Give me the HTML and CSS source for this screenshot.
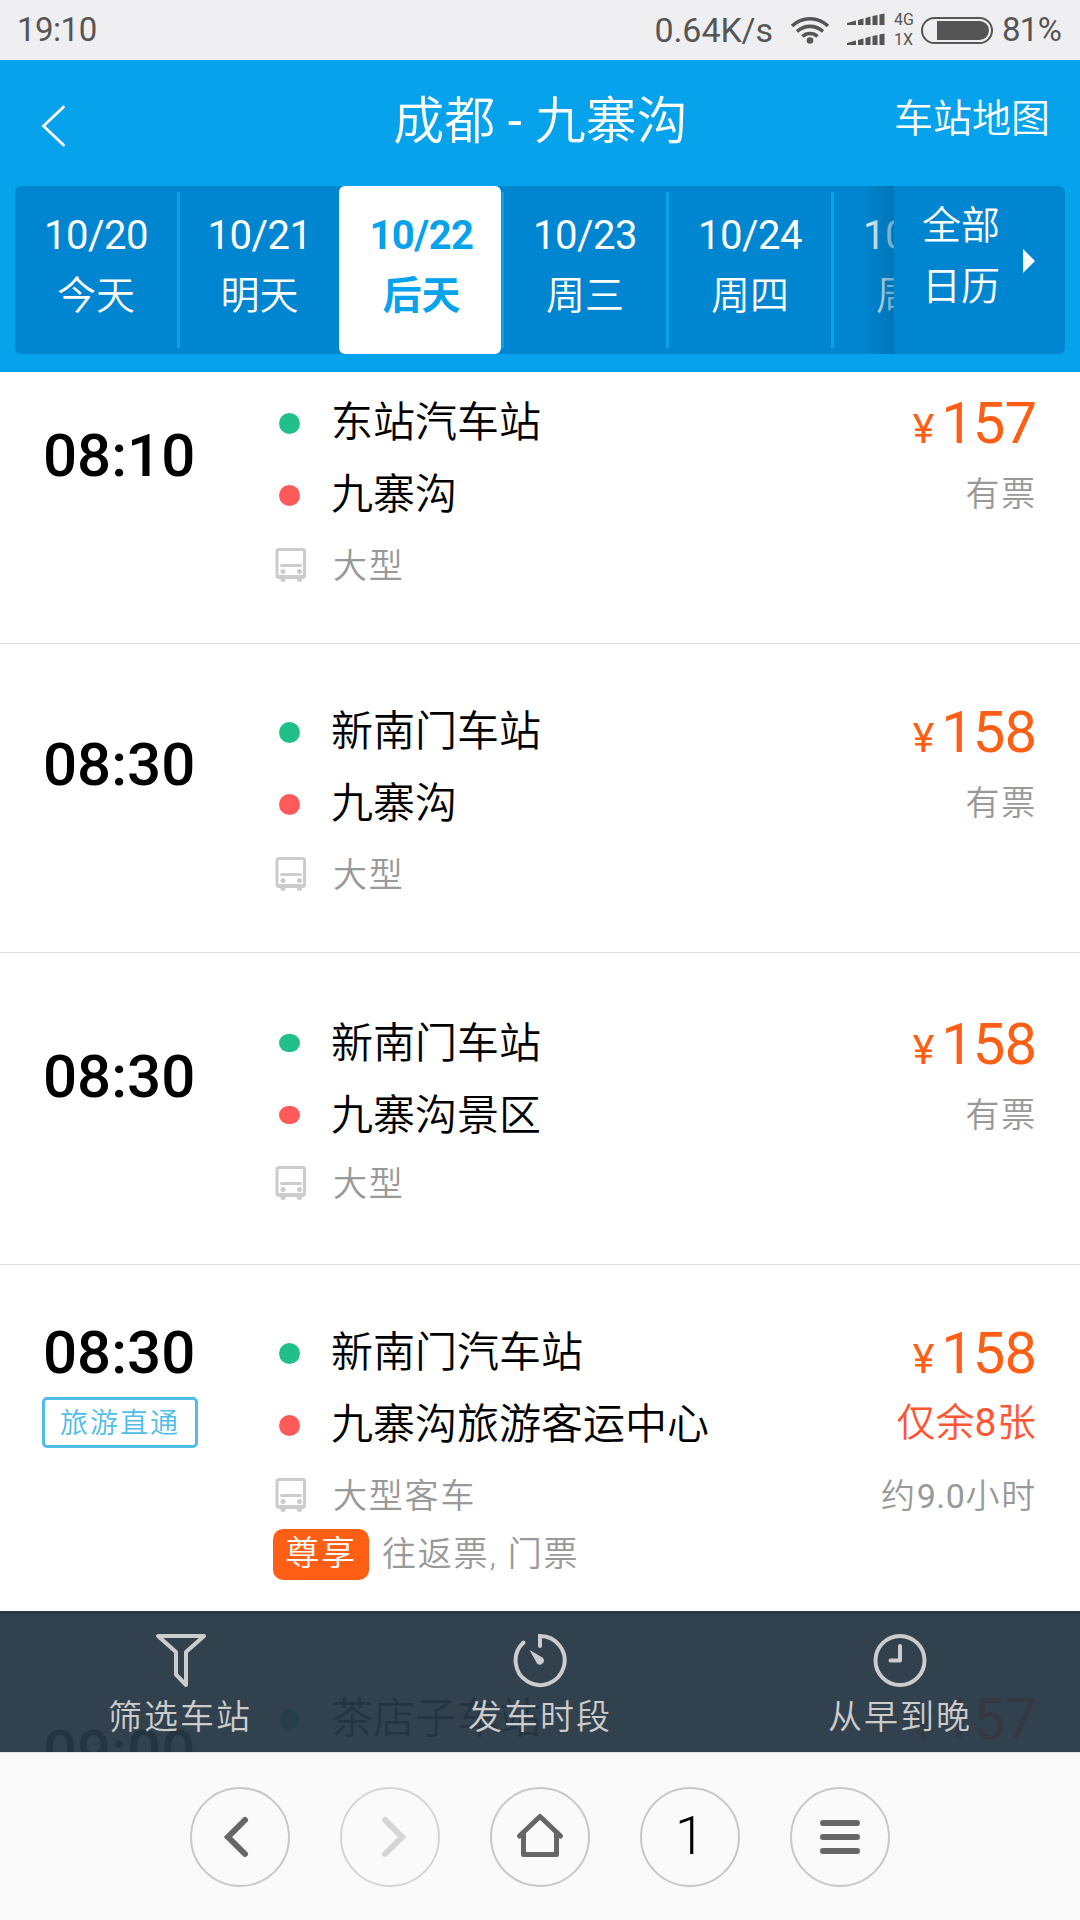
FILE: index.html
```html
<!DOCTYPE html>
<html lang="zh-CN">
<head>
    <meta charset="UTF-8">
    <meta name="viewport" content="width=device-width, initial-scale=1.0">
    <title>成都 - 九寨沟</title>
    <link rel="stylesheet" href="styles.css">
</head>
<body>
    <svg class="sprite" width="0" height="0">
        <symbol id="bus" viewBox="0 0 32 34">
            <rect x="2" y="1.500" width="27.500" height="28" rx="2" fill="none" stroke="#ccc" stroke-width="3"/>
            <path d="M6.500 17.500h19M3.500 28.500h25" stroke="#ccc" stroke-width="3" stroke-linecap="round"/>
            <circle cx="8" cy="23.500" r="2.500" fill="#ccc"/>
            <circle cx="24.500" cy="23.500" r="2.500" fill="#ccc"/>
            <path d="M5.500 30h5v1.500a2 2 0 0 1-5 0zM22 30h5v1.500a2 2 0 0 1-5 0z" fill="#ccc"/>
        </symbol>
    </svg>

    <div class="status">
        <span class="clock">19:10</span>
        <span class="speed">0.64K/s</span>
        <svg class="wifi" width="40" height="30" viewBox="0 0 40 30">
            <g fill="none" stroke="#555" stroke-width="3.6">
                <path d="M2 11a26 26 0 0 1 36 0"/>
                <path d="M7 16.500a19 19 0 0 1 26 0"/>
                <path d="M12.500 21.500a11 11 0 0 1 15 0"/>
            </g>
            <circle cx="20" cy="25.500" r="3.300" fill="#555"/>
        </svg>
        <svg class="signal" width="38" height="34" viewBox="0 0 38 34">
            <g id="bars" fill="#555">
                <path d="M0 10l9-2.500V12H0z"/>
                <path d="M11 7l5.500-1.500V12H11z"/>
                <path d="M18.500 5l5-1.500V12h-5z"/>
                <path d="M25.500 3l5-1V12h-5z"/>
                <path d="M32.500 1.500l5-1V12h-5z"/>
            </g>
            <use href="#bars" y="20"/>
        </svg>
        <div class="network"><span>4G</span><span>1X</span></div>
        <div class="battery"><div class="battery-level"></div></div>
        <span class="percent">81%</span>
    </div>

    <header class="header">
        <div class="title-bar">
            <svg class="back" width="28" height="44" viewBox="0 0 28 44">
                <path d="M25.500 3L5.500 22l20 19" fill="none" stroke="#fff" stroke-width="2.800" stroke-linecap="round"/>
            </svg>
            <h1>成都 <span class="num">-</span> 九寨沟</h1>
            <a class="map-link">车站地图</a>
        </div>
        <div class="dates">
            <div class="days">
                <div class="day"><span>10/20</span><span>今天</span></div>
                <i class="line"></i>
                <div class="day before-active"><span>10/21</span><span>明天</span></div>
                <div class="day active"><span>10/22</span><span>后天</span></div>
                <i class="line"></i>
                <div class="day"><span>10/23</span><span>周三</span></div>
                <i class="line"></i>
                <div class="day"><span>10/24</span><span>周四</span></div>
                <i class="line"></i>
                <div class="day"><span>10/25</span><span>周五</span></div>
            </div>
            <div class="calendar">
                <div class="calendar-text"><span>全部</span><span>日历</span></div>
                <i class="arrow"></i>
            </div>
        </div>
    </header>

    <main class="content">
        <div class="list">
            <div class="trip first">
                <div class="depart"><b class="time">08:10</b></div>
                <div class="route">
                    <p class="station from">东站汽车站</p>
                    <p class="station to">九寨沟</p>
                    <p class="bus"><svg width="32" height="34"><use href="#bus"/></svg>大型</p>
                </div>
                <div class="info">
                    <p class="price"><small>¥</small>157</p>
                    <p class="note">有票</p>
                </div>
            </div>
            <div class="trip">
                <div class="depart"><b class="time">08:30</b></div>
                <div class="route">
                    <p class="station from">新南门车站</p>
                    <p class="station to">九寨沟</p>
                    <p class="bus"><svg width="32" height="34"><use href="#bus"/></svg>大型</p>
                </div>
                <div class="info">
                    <p class="price"><small>¥</small>158</p>
                    <p class="note">有票</p>
                </div>
            </div>
            <div class="trip taller">
                <div class="depart"><b class="time">08:30</b></div>
                <div class="route">
                    <p class="station from">新南门车站</p>
                    <p class="station to">九寨沟景区</p>
                    <p class="bus"><svg width="32" height="34"><use href="#bus"/></svg>大型</p>
                </div>
                <div class="info">
                    <p class="price"><small>¥</small>158</p>
                    <p class="note">有票</p>
                </div>
            </div>
            <div class="trip with-tags">
                <div class="depart">
                    <b class="time">08:30</b>
                    <span class="tag">旅游直通</span>
                </div>
                <div class="route">
                    <p class="station from">新南门汽车站</p>
                    <p class="station to">九寨沟旅游客运中心</p>
                    <p class="bus"><svg width="32" height="34"><use href="#bus"/></svg>大型客车</p>
                    <p class="extra"><span class="badge">尊享</span>往返票, 门票</p>
                </div>
                <div class="info">
                    <p class="price"><small>¥</small>158</p>
                    <p class="few">仅余<span class="num">8</span>张</p>
                    <p class="note">约<span class="num">9.0</span>小时</p>
                </div>
            </div>
            <div class="trip">
                <div class="depart"><b class="time">09:00</b></div>
                <div class="route">
                    <p class="station from">茶店子车站</p>
                </div>
                <div class="info">
                    <p class="price"><small>¥</small>157</p>
                </div>
            </div>
        </div>

        <div class="filters">
            <div class="filter">
                <svg width="56" height="56" viewBox="0 0 56 56" fill="none" stroke="#ccc" stroke-width="4" stroke-linejoin="round">
                    <path d="M6 4h46L34 20v33l-10-10.500V20z"/>
                </svg>
                <span>筛选车站</span>
            </div>
            <div class="filter">
                <svg width="56" height="56" viewBox="0 0 56 56" fill="none" stroke="#ccc" stroke-width="4" stroke-linecap="round">
                    <path d="M11.500 10.500A24.500 24.500 0 1 0 28 4v10" stroke-linejoin="miter"/>
                    <path d="M17.500 18l13 7.500a4 4 0 0 1-5.500 6z" fill="#ccc" stroke="none"/>
                </svg>
                <span>发车时段</span>
            </div>
            <div class="filter">
                <svg width="56" height="56" viewBox="0 0 56 56" fill="none" stroke="#ccc" stroke-width="4" stroke-linecap="round" stroke-linejoin="round">
                    <circle cx="28" cy="28.500" r="24.500"/>
                    <path d="M28 14v14.500H18.500"/>
                </svg>
                <span>从早到晚</span>
            </div>
        </div>
    </main>

    <nav class="browser-bar">
        <div class="nav-button">
            <svg width="50" height="50" viewBox="0 0 50 50" fill="none" stroke="#666" stroke-width="6" stroke-linecap="round">
                <path d="M30 8L13 25l17 17"/>
            </svg>
        </div>
        <div class="nav-button disabled">
            <svg width="50" height="50" viewBox="0 0 50 50" fill="none" stroke="#d5d5d5" stroke-width="6" stroke-linecap="round">
                <path d="M20 8l17 17-17 17"/>
            </svg>
        </div>
        <div class="nav-button">
            <svg width="50" height="50" viewBox="0 0 50 50" fill="none" stroke="#666" stroke-width="5" stroke-linecap="round" stroke-linejoin="round">
                <path d="M4.500 24L25 4.500 45.500 24M8.500 21v21.500h33V21"/>
            </svg>
        </div>
        <div class="nav-button tabs">1</div>
        <div class="nav-button">
            <svg width="50" height="50" viewBox="0 0 50 50" stroke="#666" stroke-width="6" stroke-linecap="round">
                <path d="M8 11h34M8 25h34M8 39h34"/>
            </svg>
        </div>
    </nav>
</body>
</html>
```
FILE: styles.css
```css
* {
    box-sizing: border-box;
}
body {
    margin: 0;
    width: 1080px;
    height: 1920px;
    display: flex;
    flex-direction: column;
    overflow: hidden;
    background: #fff;
    color: #000;
    font-family: Roboto, "Noto Sans CJK SC", sans-serif;
    font-weight: 350;
}
h1, p {
    margin: 0;
    font-weight: 350;
}
svg {
    display: block;
    flex: none;
}
.sprite {
    position: absolute;
}
.num {
    font-weight: 400;
    letter-spacing: 0.5px;
}

/* status bar */
.status {
    display: flex;
    align-items: center;
    height: 60px;
    padding: 0 19px 0 17px;
    background: #efeff1;
    color: #555;
    font-size: 33px;
    font-weight: 400;
    line-height: 62px;
}
.clock {
    margin-right: auto;
    letter-spacing: -0.5px;
}
.speed {
    margin-right: 17px;
    font-size: 34px;
    letter-spacing: -0.1px;
}
.wifi {
    margin-right: 17px;
}
.signal {
    margin-right: 9px;
}
.network {
    display: flex;
    flex-direction: column;
    width: 27px;
    font-size: 16px;
    line-height: 20px;
}
.battery {
    width: 72px;
    height: 27px;
    padding: 2px 2px 2px 14px;
    border: 2px solid #555;
    border-radius: 14px;
}
.battery-level {
    height: 19px;
    border-radius: 0 10px 10px 0;
    background: #555;
}
.percent {
    width: 59px;
    margin-left: 9px;
    letter-spacing: -0.7px;
}

/* header */
.header {
    height: 312px;
    background: #06a3ec;
    color: #fff;
}
.title-bar {
    display: grid;
    grid-template-columns: 200px 1fr 200px;
    align-items: center;
    height: 126px;
    padding: 0 30px 2px 38px;
}
.back {
    margin-top: 8px;
}
h1 {
    margin-left: -7px;
    text-align: center;
    font-size: 51px;
    line-height: 60px;
}
.map-link {
    margin-top: -14px;
    text-align: right;
    font-size: 39px;
}
.dates {
    display: flex;
    height: 168px;
    margin: 0 15px;
    border-radius: 6px;
    background: #0086d1;
    overflow: hidden;
}
.days {
    position: relative;
    display: flex;
    align-items: center;
    width: 879px;
    overflow: hidden;
}
.days::after {
    content: "";
    position: absolute;
    top: 0;
    right: 0;
    width: 32px;
    height: 168px;
    background: linear-gradient(to right, rgba(0, 105, 165, 0), rgba(0, 105, 165, 0.6));
}
.day {
    display: flex;
    flex: none;
    flex-direction: column;
    align-items: center;
    width: 162px;
    height: 168px;
    padding: 20px 0 0;
    font-size: 39px;
    line-height: 60px;
}
.day span:first-child {
    font-size: 40px;
    font-weight: 400;
    letter-spacing: -0.5px;
}
.before-active {
    width: 159px;
}
.active {
    padding-left: 3px;
    border-radius: 6px;
    background: #fff;
    color: #06a3ec;
    font-weight: 700;
}
.day.active span {
    font-weight: 700;
}
.line {
    flex: none;
    width: 3px;
    height: 156px;
    background: #06a3ec;
}
.calendar {
    display: flex;
    flex: 1;
    padding: 10px 0 0 28px;
    font-size: 39px;
    line-height: 61px;
}
.calendar-text {
    display: flex;
    flex-direction: column;
}
.arrow {
    height: 24px;
    margin: 53px 0 0 23px;
    border: 12px solid transparent;
    border-left-color: #fff;
    border-right: 0;
}

/* trips */
.content {
    position: relative;
    height: 1380px;
    overflow: hidden;
}
.trip {
    display: flex;
    height: 309px;
    padding: 51px 44px 0;
    border-bottom: 1px solid #ddd;
    line-height: 72px;
}
.first {
    margin-top: -37px;
}
.taller {
    height: 312px;
    padding-top: 54px;
}
.taller .bus {
    margin-top: -3px;
}
.with-tags {
    height: 366px;
}
.depart {
    width: 231px;
    padding-top: 34px;
}
.with-tags .depart {
    padding-top: 1px;
}
.time {
    display: block;
    margin-left: -1px;
    font-size: 60px;
    font-weight: 500;
}
.tag {
    display: block;
    width: 156px;
    height: 51px;
    margin: 8px 0 0 -2px;
    padding-left: 15px;
    border: 3px solid #4fbdea;
    border-radius: 5px;
    color: #4fbdea;
    font-size: 28px;
    letter-spacing: 2px;
    line-height: 47px;
}
.route {
    flex: 1;
}
.station {
    display: flex;
    align-items: center;
    height: 72px;
    padding-top: 2px;
    font-size: 42px;
    line-height: 72px;
}
.station::before {
    content: "";
    width: 21px;
    height: 21px;
    margin: 0 31px 0 4px;
    border-radius: 50%;
    background: #20c088;
}
.taller .station::before {
    height: 18px;
    margin-top: -2px;
    border-radius: 9px;
}
.station.to::before {
    background: #ff5a5a;
}
.bus, .extra, .note {
    color: #999;
    font-size: 34px;
    letter-spacing: 1.8px;
}
.bus {
    display: flex;
    align-items: center;
}
.bus svg {
    margin: -2px 26px 0 0;
}
.extra {
    display: flex;
    align-items: center;
    height: 51px;
    margin: -3px 0 0 -2px;
    line-height: 47px;
}
.badge {
    width: 96px;
    height: 51px;
    margin-right: 13px;
    border-radius: 10px;
    background: #ff5f14;
    color: #fff;
    text-align: center;
    line-height: 48px;
}
.info {
    text-align: right;
}
.price {
    display: flex;
    align-items: baseline;
    justify-content: flex-end;
    height: 72px;
    color: #ff5f14;
    font-size: 58px;
    font-weight: 400;
    letter-spacing: -1px;
    line-height: 74px;
}
.price small {
    margin-right: 8px;
    font-size: 41px;
}
.few {
    height: 72px;
    color: #ff5533;
    font-size: 39px;
    line-height: 71px;
}
.note {
    margin-right: -1px;
}

/* filter bar over the list */
.filters {
    position: absolute;
    left: 0;
    bottom: 0;
    display: flex;
    width: 1080px;
    height: 141px;
    border-top: 3px solid #293746;
    background: rgba(39, 55, 69, 0.95);
    color: #ccc;
}
.filter {
    display: flex;
    flex: 1;
    flex-direction: column;
    align-items: center;
    padding-top: 18px;
    font-size: 34px;
    letter-spacing: 2px;
    line-height: 58px;
}

/* browser toolbar */
.browser-bar {
    display: flex;
    justify-content: center;
    gap: 50px;
    height: 168px;
    padding-top: 34px;
    border-top: 1px solid #e5e5e5;
    background: #fafafa;
}
.nav-button {
    display: flex;
    align-items: center;
    justify-content: center;
    width: 100px;
    height: 100px;
    border: 2px solid #c8c8c8;
    border-radius: 50%;
}
.disabled {
    border-color: #d5d5d5;
}
.tabs {
    padding-bottom: 3px;
    font-size: 54px;
    font-weight: 300;
}
```
